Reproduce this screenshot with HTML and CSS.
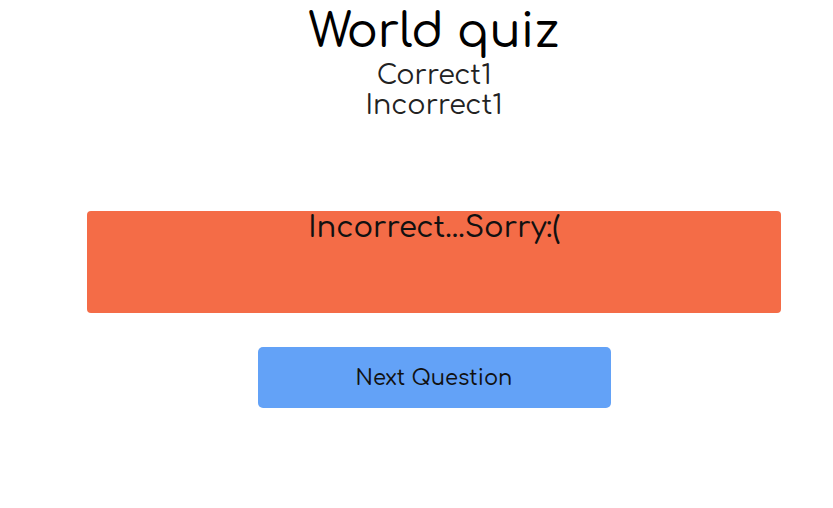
FILE: index.html
```html
<!DOCTYPE html>
<html>
<head>
<meta charset="utf-8">
<link rel="stylesheet" href="styles.css">
</head>
<body>
<div class="page">
  <h1 class="title">World quiz</h1>
  <div class="score">Correct1</div>
  <div class="score">Incorrect1</div>
  <div class="result">Incorrect...Sorry:(</div>
  <button class="next">Next Question</button>
</div>
</body>
</html>
```
FILE: styles.css
```css
html, body {
  margin: 0;
  padding: 0;
  background: #ffffff;
}
body {
  font-family: "Comfortaa", "Lato", "Noto Sans", sans-serif;
  color: #111;
}
.page {
  width: 833px;
  padding-left: 35px;
  box-sizing: border-box;
  display: flex;
  flex-direction: column;
  align-items: center;
}
.title {
  margin: 0;
  padding-top: 4px;
  font-size: 46px;
  font-weight: 500;
  line-height: 56px;
  color: #000;
}
.score {
  font-size: 27px;
  line-height: 30px;
  color: #222;
}
.result {
  margin-top: 91px;
  width: 694px;
  height: 102px;
  background: #f46c47;
  border-radius: 4px;
  text-align: center;
  font-size: 29px;
  font-weight: 500;
  line-height: 32px;
  padding-top: 1px;
  box-sizing: border-box;
  color: #111;
}
.next {
  margin-top: 34px;
  width: 353px;
  height: 61px;
  background: #63a2f7;
  border: none;
  border-radius: 5px;
  font-family: inherit;
  font-size: 21px;
  font-weight: 500;
  color: #111;
}
```
